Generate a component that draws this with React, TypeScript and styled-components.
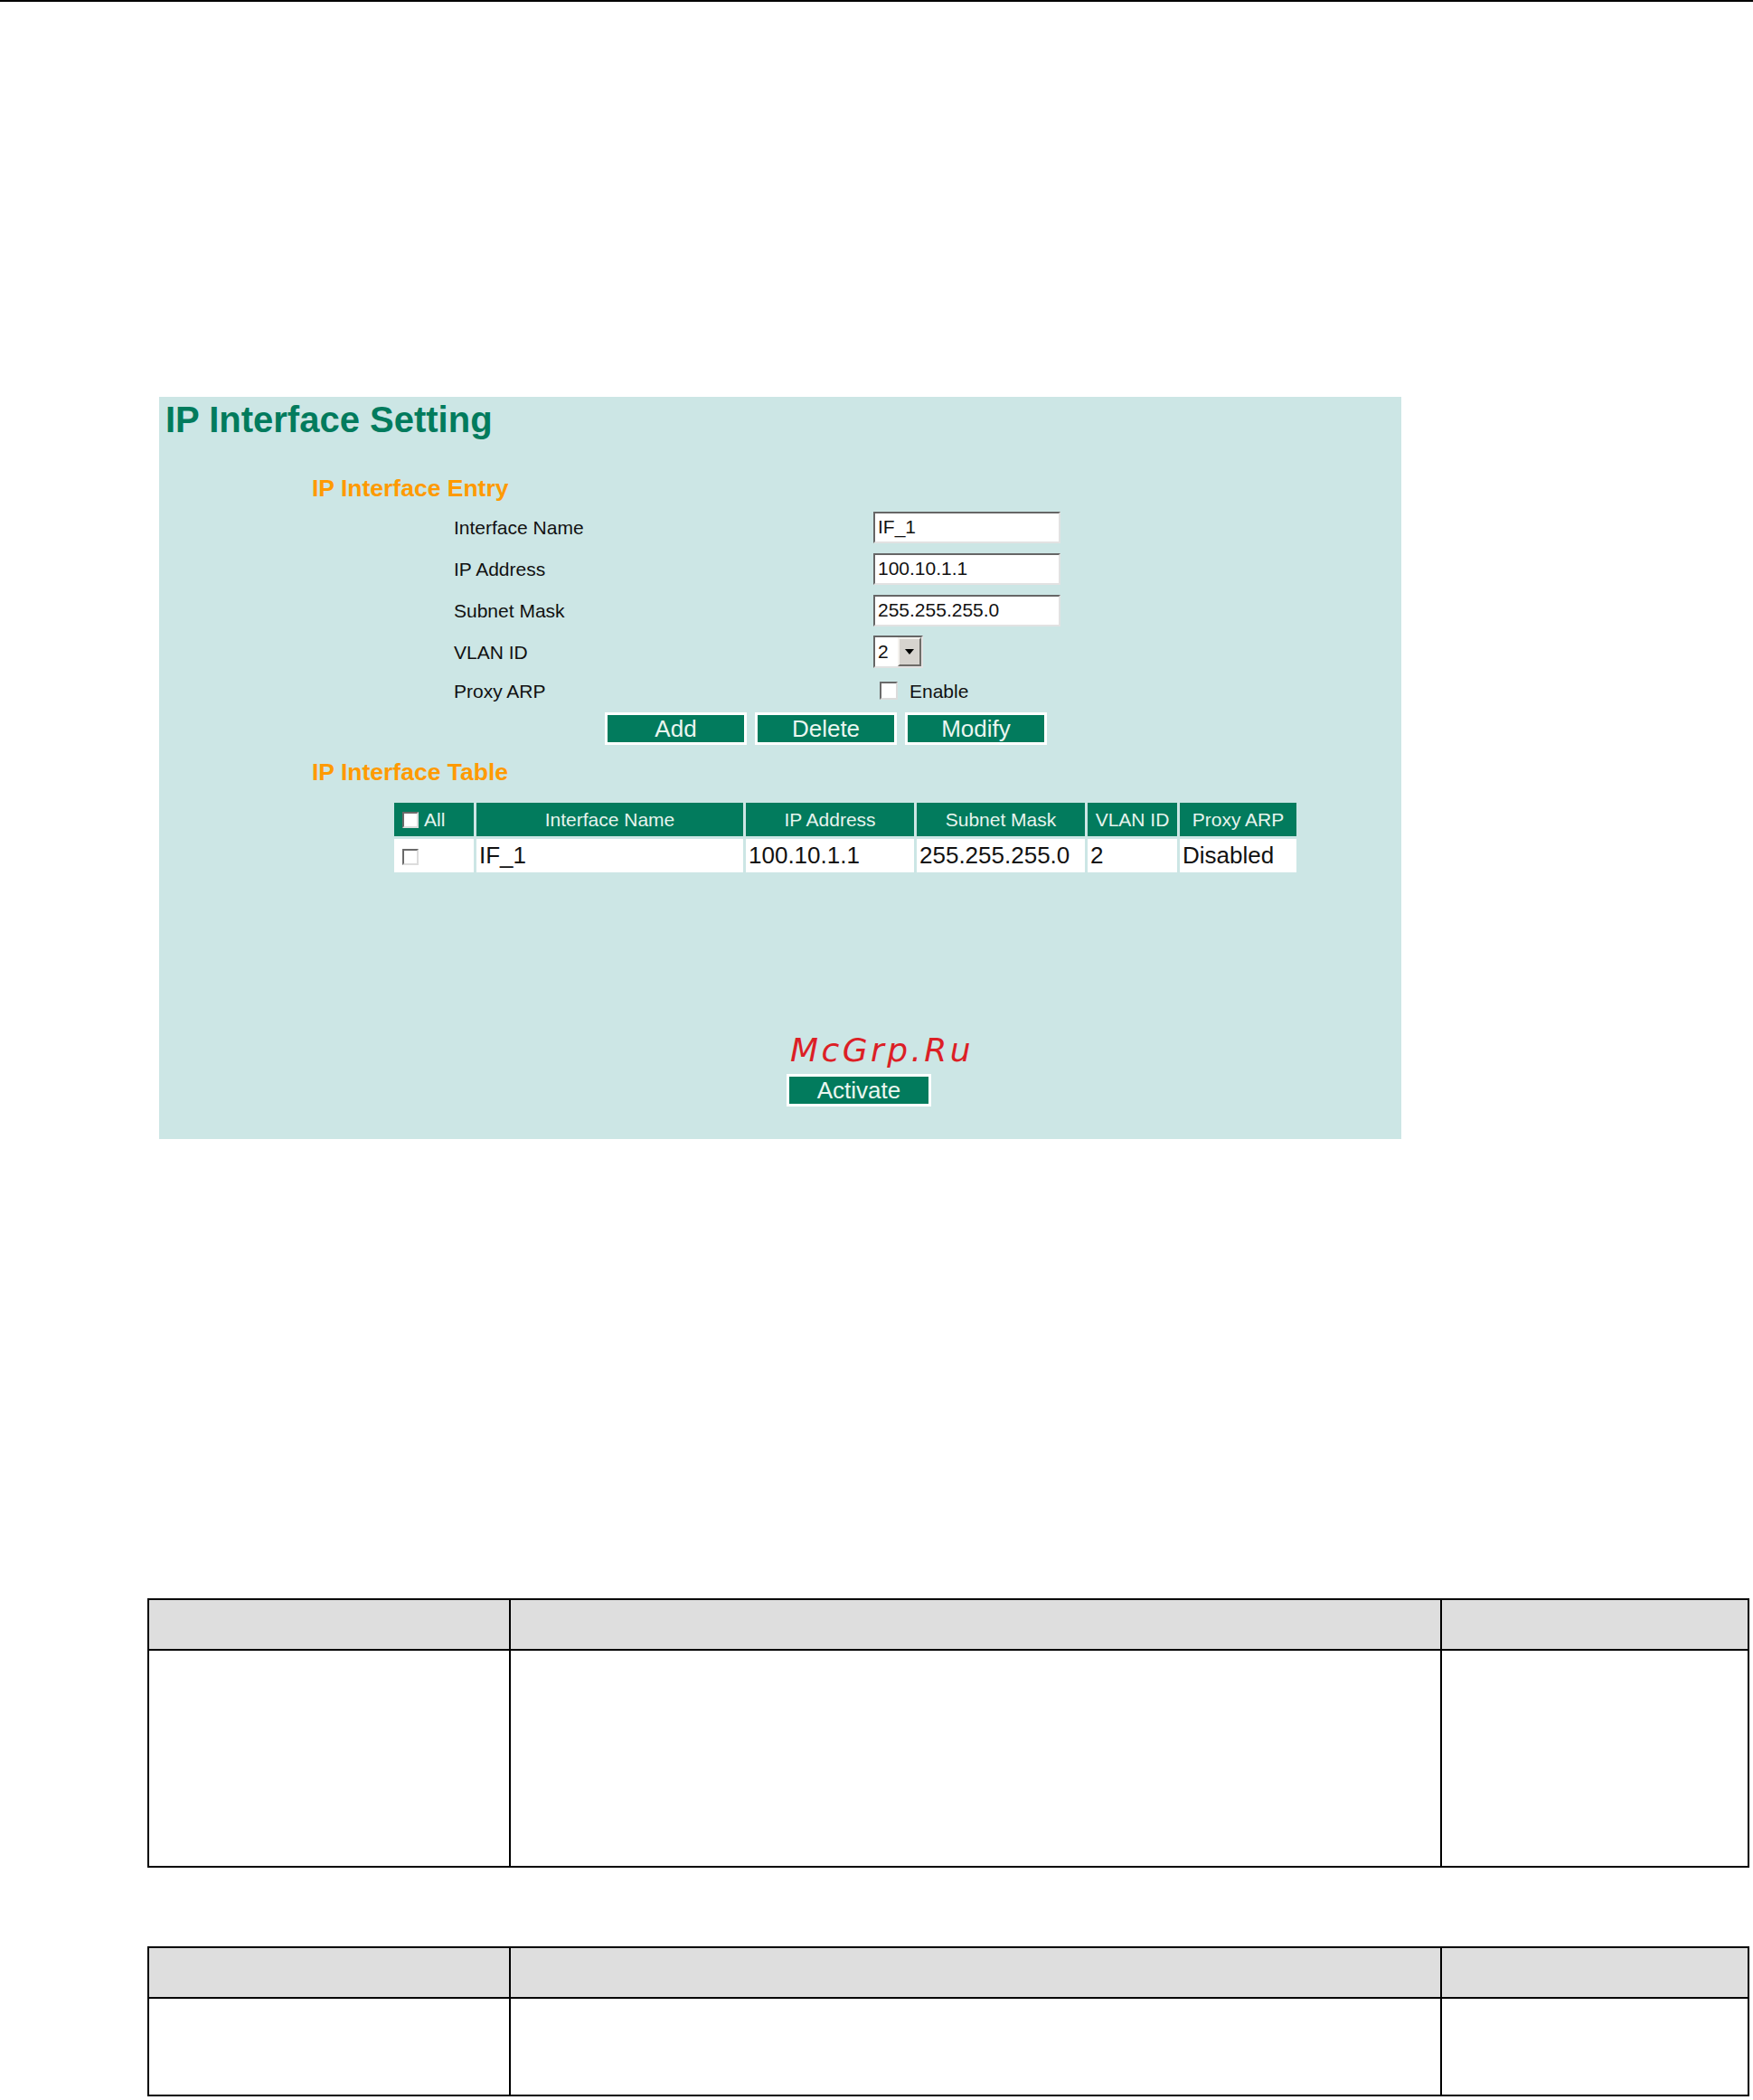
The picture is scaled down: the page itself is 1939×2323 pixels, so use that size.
import { createGlobalStyle } from "styled-components";
import styled from "styled-components";

const GREEN = "#027b5d";
const PANEL = "#cce6e5";

const GlobalStyle = createGlobalStyle`
  html, body {
    margin: 0;
    padding: 0;
    background: #fff;
    font-family: "Liberation Sans", Arial, sans-serif;
  }
`;

const Page = styled.div`
  width: 1939px;
  min-height: 2323px;
  overflow: hidden;
`;

const TopRule = styled.div`
  height: 2px;
  background: #000;
`;

const Panel = styled.section`
  position: relative;
  box-sizing: border-box;
  margin: 437px 0 0 176px;
  width: 1374px;
  height: 821px;
  padding: 5px 0 0 7px;
  background: ${PANEL};
`;

const Title = styled.h1`
  margin: 0;
  font-size: 40px;
  line-height: 40px;
  font-weight: bold;
  color: ${GREEN};
`;

const SectionTitle = styled.h2<{ $top: number }>`
  margin: ${(p) => p.$top}px 0 0 162px;
  font-size: 26.5px;
  line-height: 26px;
  font-weight: bold;
  color: #ff9a00;
`;

const FieldGrid = styled.div`
  display: grid;
  grid-template-columns: 464px auto;
  grid-template-rows: 46px 46px 46px 46px 40px;
  align-items: center;
  margin: 7px 0 0 319px;
`;

const Label = styled.span`
  font-size: 21px;
  line-height: 1;
  color: #111;
`;

const TextBox = styled.input`
  box-sizing: border-box;
  width: 207px;
  height: 35px;
  padding: 0 3px;
  border: 2px solid;
  border-color: #666 #e2e2e2 #e2e2e2 #666;
  background: #fff;
  font-family: "Liberation Sans", Arial, sans-serif;
  font-size: 21px;
  color: #111;
  outline: none;
`;

const SelectBox = styled.div`
  box-sizing: border-box;
  display: flex;
  width: 55px;
  height: 36px;
  border: 2px solid;
  border-color: #666 #e2e2e2 #e2e2e2 #666;
  background: #fff;
`;

const SelectValue = styled.span`
  flex: 1;
  padding-left: 3px;
  font-size: 21px;
  line-height: 32px;
  color: #111;
`;

const SelectArrow = styled.span`
  box-sizing: border-box;
  display: flex;
  align-items: center;
  justify-content: center;
  width: 26px;
  border: 2px solid;
  border-color: #f4f2ee #6e6c68 #6e6c68 #f4f2ee;
  background: #d6d3ce;
`;

const CheckRow = styled.label`
  display: flex;
  align-items: center;
  gap: 13px;
  padding-left: 7px;
`;

const Check = styled.span<{ $size: number }>`
  box-sizing: border-box;
  display: inline-block;
  width: ${(p) => p.$size}px;
  height: ${(p) => p.$size}px;
  border: 2px solid;
  border-color: #6a6a6a #dcdcdc #dcdcdc #6a6a6a;
  background: #fff;
  vertical-align: middle;
`;

const ButtonRow = styled.div`
  display: flex;
  gap: 9px;
  margin: 4px 0 0 486px;
`;

const GreenButton = styled.button<{ $width: number }>`
  box-sizing: border-box;
  width: ${(p) => p.$width}px;
  height: 36px;
  padding: 0;
  border: 3px solid #fff;
  background: ${GREEN};
  color: #eaf6f0;
  font-family: "Liberation Sans", Arial, sans-serif;
  font-size: 26px;
  line-height: 1;
  cursor: pointer;
`;

const ActivateButton = styled(GreenButton)`
  display: block;
  margin: 220px 0 0 687px;
`;

const InterfaceTable = styled.table`
  margin: 18px 0 0 250px;
  border-collapse: separate;
  border-spacing: 3px;
  table-layout: fixed;
`;

const HeadCell = styled.th<{ $width: number }>`
  width: ${(p) => p.$width}px;
  height: 37px;
  padding: 0;
  background: ${GREEN};
  color: #e6f4ee;
  font-size: 21px;
  font-weight: normal;
  text-align: center;
  white-space: nowrap;
`;

const AllHead = styled.span`
  display: flex;
  align-items: center;
  gap: 6px;
  padding-left: 9px;
`;

const BodyCell = styled.td`
  height: 37px;
  padding: 0 0 0 3px;
  background: #fff;
  color: #111;
  font-size: 26px;
  white-space: nowrap;
`;

const CheckCell = styled(BodyCell)`
  padding-left: 9px;
`;

const Watermark = styled.div`
  position: absolute;
  left: 698px;
  top: 705px;
  font-family: "DejaVu Sans", Verdana, sans-serif;
  font-style: italic;
  font-size: 36px;
  line-height: 36px;
  letter-spacing: 3.4px;
  color: #dc1f26;
  pointer-events: none;
`;

const DocTables = styled.div`
  display: flex;
  flex-direction: column;
  gap: 87px;
  margin: 508px 0 0 163px;
  width: 1772px;
`;

const DocTable = styled.table`
  width: 100%;
  border-collapse: collapse;
  table-layout: fixed;
  border: 2px solid #000;
`;

const DocRow = styled.tr<{ $height: number }>`
  height: ${(p) => p.$height}px;
`;

const DocHead = styled.td`
  padding: 0;
  border: 2px solid #000;
  background: #dedede;
`;

const DocCell = styled.td`
  padding: 0;
  border: 2px solid #000;
  background: #fff;
`;

const fields = [
  { label: "Interface Name", value: "IF_1" },
  { label: "IP Address", value: "100.10.1.1" },
  { label: "Subnet Mask", value: "255.255.255.0" },
];

const columns = [
  { title: "Interface Name", width: 295 },
  { title: "IP Address", width: 186 },
  { title: "Subnet Mask", width: 186 },
  { title: "VLAN ID", width: 99 },
  { title: "Proxy ARP", width: 129 },
];

const row = ["IF_1", "100.10.1.1", "255.255.255.0", "2", "Disabled"];

const ArrowIcon = () => (
  <svg width="10" height="6" viewBox="0 0 10 6">
    <path d="M0 0h10L5 6z" fill="#000" />
  </svg>
);

const DocumentTable = ({ body }: { body: number }) => (
  <DocTable>
    <colgroup>
      <col style={{ width: 400 }} />
      <col style={{ width: 1030 }} />
      <col />
    </colgroup>
    <tbody>
      <DocRow $height={56}>
        <DocHead />
        <DocHead />
        <DocHead />
      </DocRow>
      <DocRow $height={body}>
        <DocCell />
        <DocCell />
        <DocCell />
      </DocRow>
    </tbody>
  </DocTable>
);

export default function App() {
  return (
    <Page>
      <GlobalStyle />
      <TopRule />
      <Panel>
        <Title>IP Interface Setting</Title>
        <SectionTitle $top={43}>IP Interface Entry</SectionTitle>
        <FieldGrid>
          {fields.map((f) => (
            <>
              <Label key={f.label}>{f.label}</Label>
              <TextBox key={f.label + "-in"} defaultValue={f.value} readOnly />
            </>
          ))}
          <Label>VLAN ID</Label>
          <SelectBox>
            <SelectValue>2</SelectValue>
            <SelectArrow>
              <ArrowIcon />
            </SelectArrow>
          </SelectBox>
          <Label>Proxy ARP</Label>
          <CheckRow>
            <Check $size={20} />
            <Label>Enable</Label>
          </CheckRow>
        </FieldGrid>
        <ButtonRow>
          <GreenButton $width={157}>Add</GreenButton>
          <GreenButton $width={157}>Delete</GreenButton>
          <GreenButton $width={157}>Modify</GreenButton>
        </ButtonRow>
        <SectionTitle $top={17}>IP Interface Table</SectionTitle>
        <InterfaceTable>
          <thead>
            <tr>
              <HeadCell $width={88}>
                <AllHead>
                  <Check $size={18} />
                  All
                </AllHead>
              </HeadCell>
              {columns.map((c) => (
                <HeadCell key={c.title} $width={c.width}>
                  {c.title}
                </HeadCell>
              ))}
            </tr>
          </thead>
          <tbody>
            <tr>
              <CheckCell>
                <Check $size={18} />
              </CheckCell>
              {row.map((v, i) => (
                <BodyCell key={i}>{v}</BodyCell>
              ))}
            </tr>
          </tbody>
        </InterfaceTable>
        <Watermark>McGrp.Ru</Watermark>
        <ActivateButton $width={160}>Activate</ActivateButton>
      </Panel>
      <DocTables>
        <DocumentTable body={240} />
        <DocumentTable body={108} />
      </DocTables>
    </Page>
  );
}
